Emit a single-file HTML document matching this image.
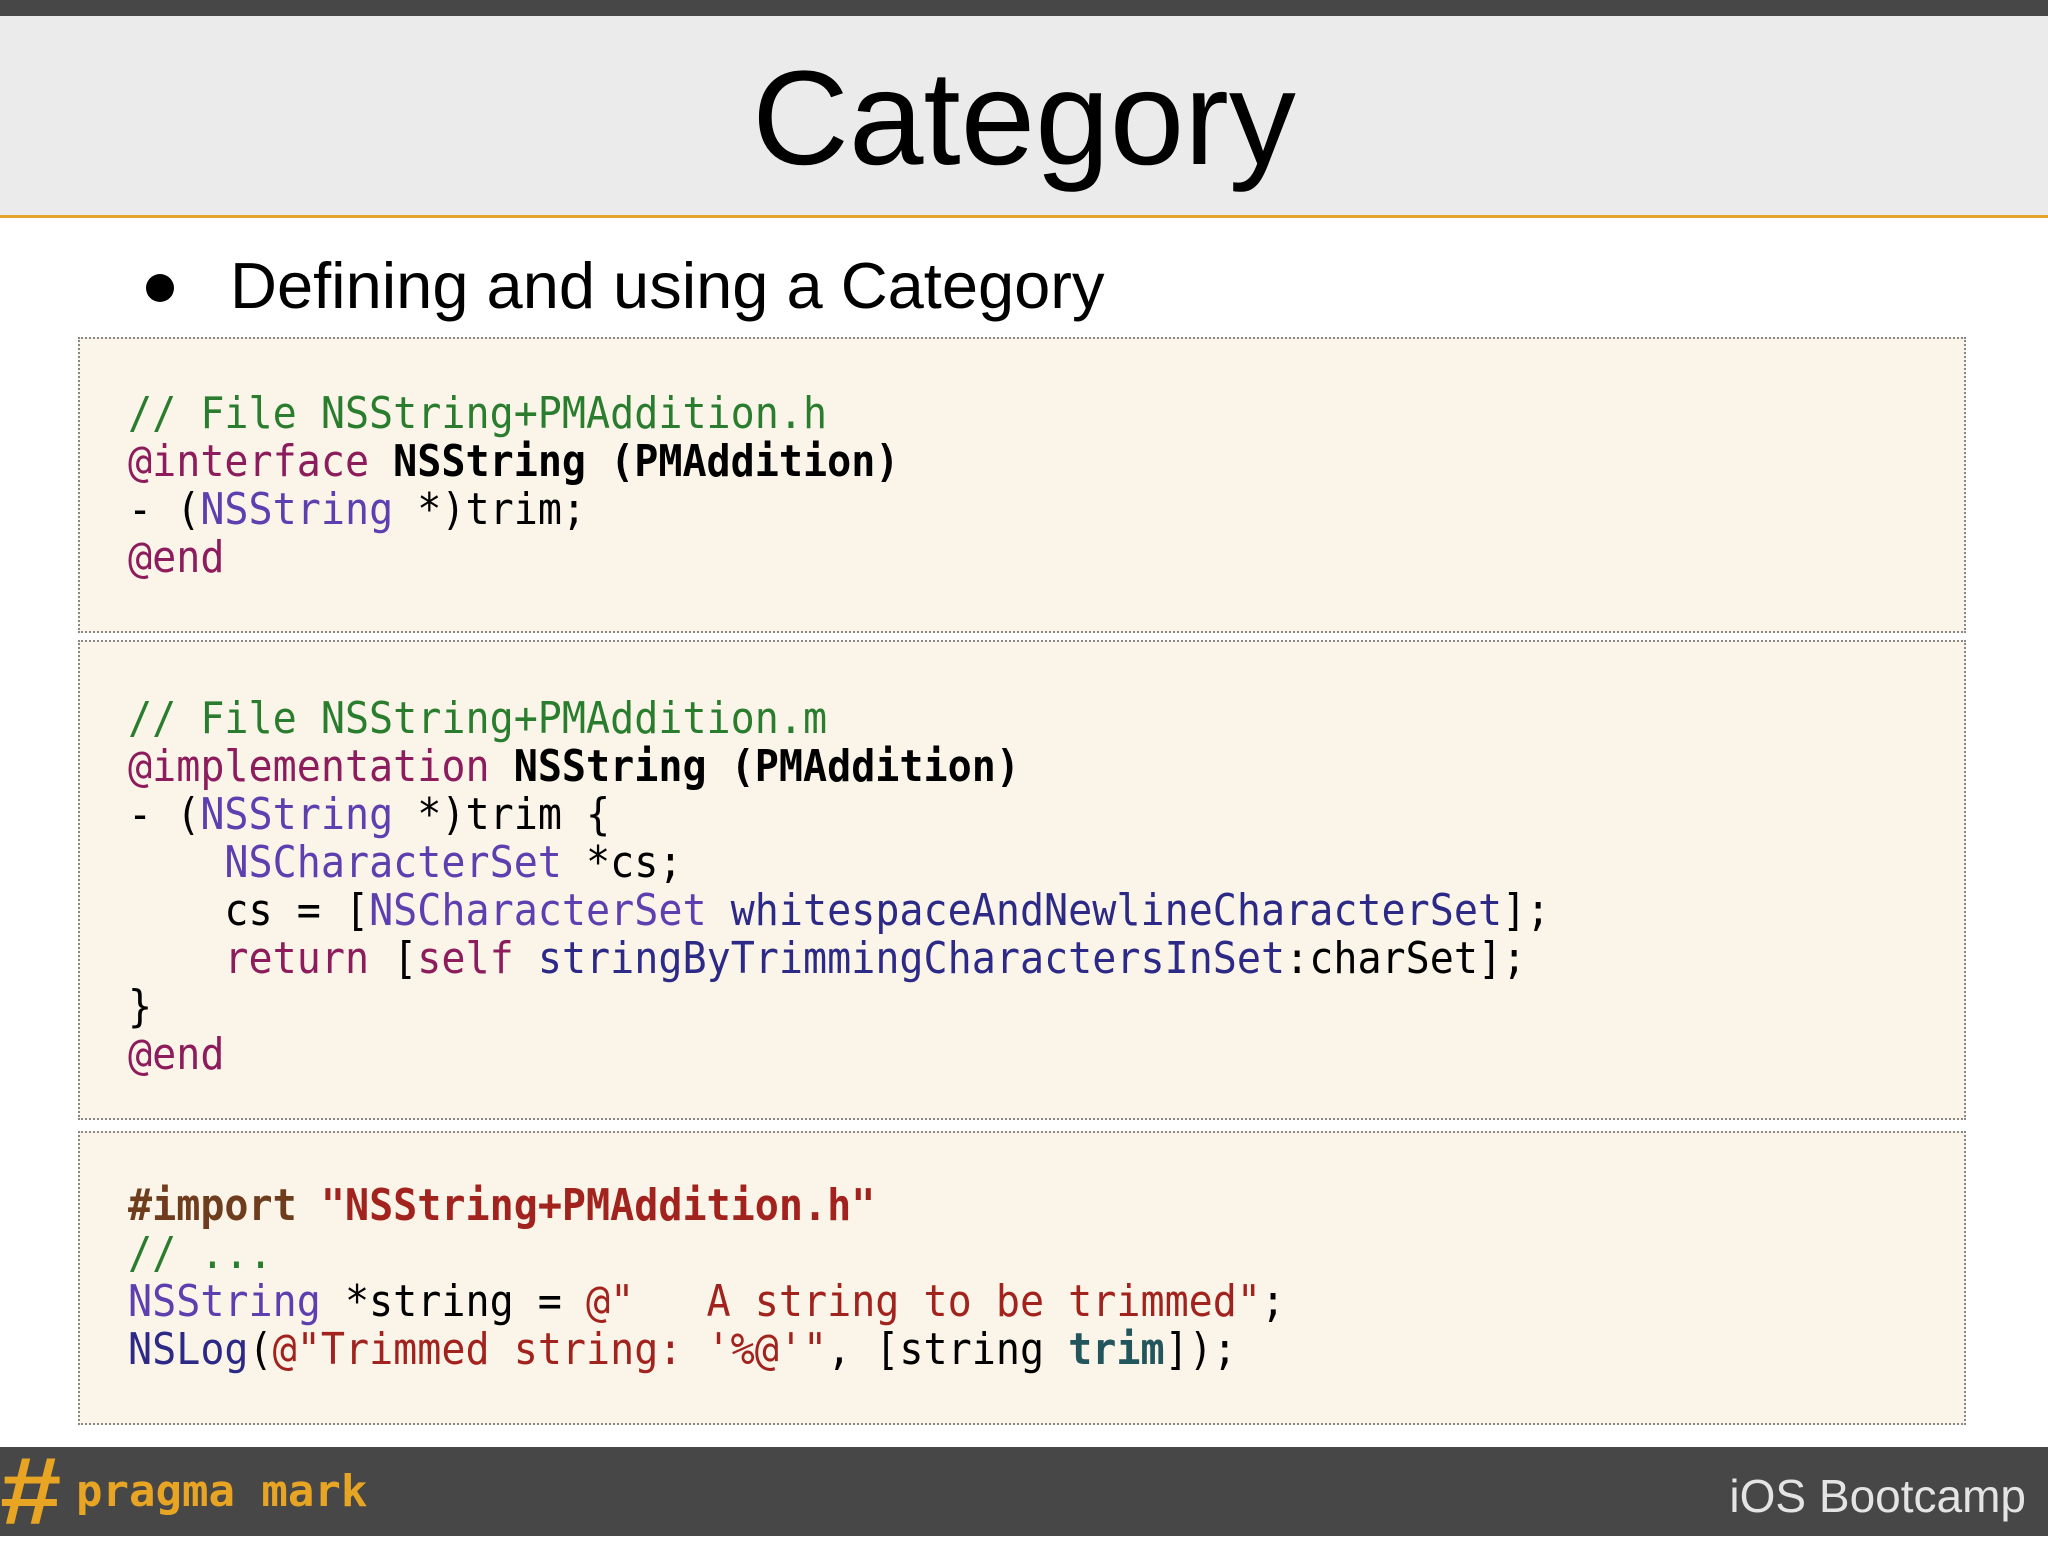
<!DOCTYPE html>
<html><head><meta charset="utf-8"><style>
*{margin:0;padding:0;box-sizing:border-box}
body{width:2048px;height:1536px;background:#fff;position:relative;overflow:hidden;font-family:"Liberation Sans",sans-serif}
.topbar{position:absolute;left:0;top:0;width:2048px;height:16px;background:#474747}
.band{position:absolute;left:0;top:16px;width:2048px;height:199px;background:#ebebeb}
.line{position:absolute;left:0;top:215px;width:2048px;height:3px;background:#e3a52a}
.title{position:absolute;left:0;width:2048px;top:34px;text-align:center;font-size:134px;line-height:170px;color:#000}
.bullet{position:absolute;left:146px;top:274px;width:28px;height:28px;border-radius:50%;background:#000}
.sub{position:absolute;left:230px;top:246px;font-size:65px;line-height:80px;color:#000}
.box{position:absolute;left:78px;width:1888px;background:#fbf5e9;border:2px dotted #888}
.code{position:absolute;left:128px;font-family:"DejaVu Sans Mono","Liberation Mono",monospace;font-size:44px;line-height:48px;white-space:pre;color:#000;transform:scaleX(0.91);transform-origin:0 0}
.c{color:#2a7d2e}.k{color:#8c1c5c}.t{color:#5d3fb0}.m{color:#2c2a86}.s{color:#a2231d}.p{color:#6e3d1e}.b{font-weight:bold}.tr{color:#22555c;font-weight:bold}
.footer{position:absolute;left:0;top:1447px;width:2048px;height:89px;background:#474747}
.hash{position:absolute;left:0px;top:1448px;font-family:"Liberation Sans",sans-serif;font-weight:bold;font-size:96px;color:#e8a423;line-height:88px;transform:scaleX(1.15);transform-origin:0 0}
.pm{position:absolute;left:76px;top:1462px;font-family:"DejaVu Sans Mono",monospace;font-weight:bold;font-size:44px;color:#e8a423;line-height:60px}
.ios{position:absolute;right:22px;top:1466px;font-size:46px;color:#e4e4e4;line-height:60px}
</style></head><body>
<div class="topbar"></div><div class="band"></div><div class="line"></div>
<div class="title">Category</div>
<div class="bullet"></div>
<div class="sub">Defining and using a Category</div>
<div class="box" style="top:337px;height:296px"></div>
<div class="box" style="top:640px;height:480px"></div>
<div class="box" style="top:1131px;height:294px"></div>
<div class="code" style="top:390px"><span class="c">// File NSString+PMAddition.h</span>
<span class="k">@interface</span> <span class="b">NSString (PMAddition)</span>
- (<span class="t">NSString</span> *)trim;
<span class="k">@end</span></div>
<div class="code" style="top:695px"><span class="c">// File NSString+PMAddition.m</span>
<span class="k">@implementation</span> <span class="b">NSString (PMAddition)</span>
- (<span class="t">NSString</span> *)trim {
    <span class="t">NSCharacterSet</span> *cs;
    cs = [<span class="t">NSCharacterSet</span> <span class="m">whitespaceAndNewlineCharacterSet</span>];
    <span class="k">return</span> [<span class="k">self</span> <span class="m">stringByTrimmingCharactersInSet</span>:charSet];
}
<span class="k">@end</span></div>
<div class="code" style="top:1182px"><span class="p b">#import</span> <span class="s b">"NSString+PMAddition.h"</span>
<span class="c">// ...</span>
<span class="t">NSString</span> *string = <span class="s">@"   A string to be trimmed"</span>;
<span class="m">NSLog</span>(<span class="s">@"Trimmed string: '%@'"</span>, [string <span class="tr">trim</span>]);</div>
<div class="footer"></div>
<div class="hash">#</div>
<div class="pm">pragma mark</div>
<div class="ios">iOS Bootcamp</div>
</body></html>
